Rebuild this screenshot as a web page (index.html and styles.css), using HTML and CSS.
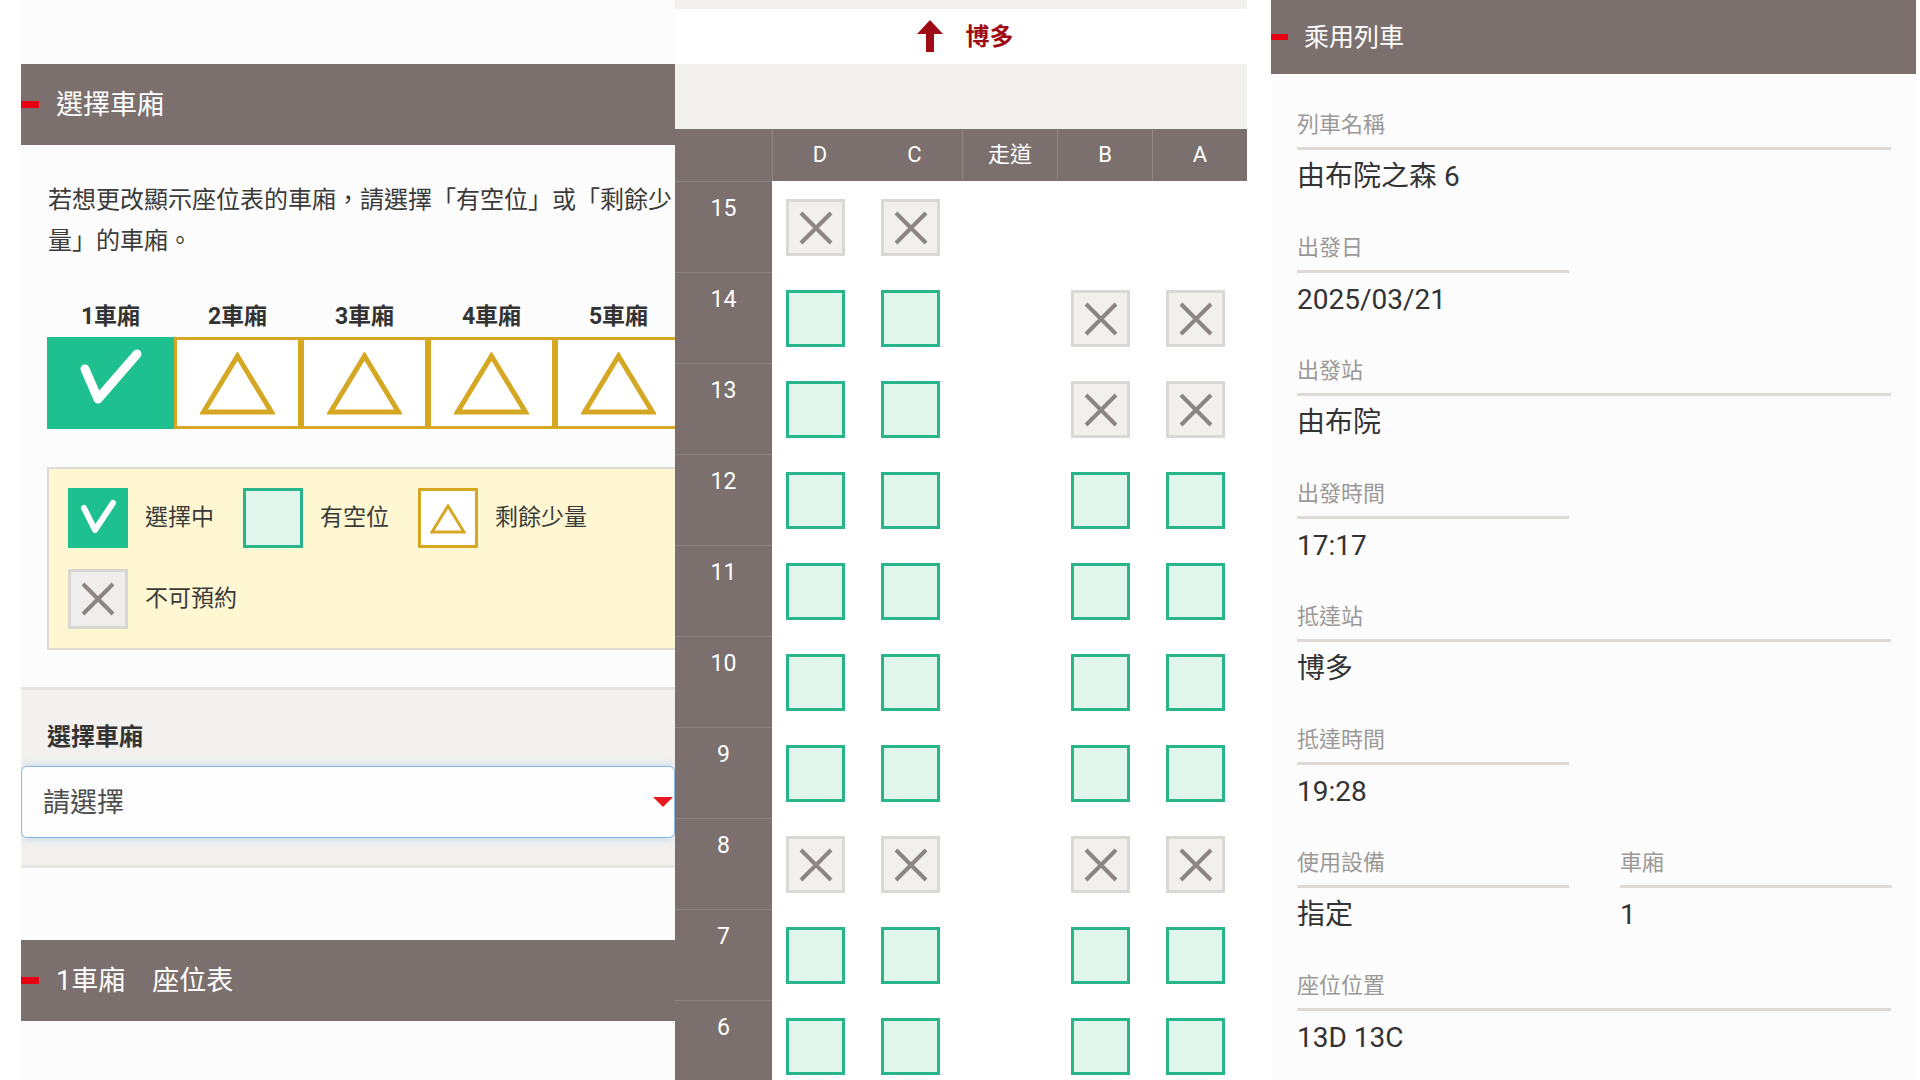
FILE: index.html
```html
<!DOCTYPE html>
<html lang="zh-Hant">
<head>
  <meta charset="UTF-8">
  <meta name="viewport" content="width=device-width, initial-scale=1">
  <title>座位表</title>
  <link rel="stylesheet" href="styles.css">
</head>
<body>
<div class="screen">

  <!-- 選擇車廂 -->
  <section class="panel pick">
    <h2 class="bar">選擇車廂</h2>
    <p class="note">若想更改顯示座位表的車廂，請選擇「有空位」或「剩餘少量」的車廂。</p>

    <div class="cars car-names">
      <div class="car-name">1車廂</div>
      <div class="car-name">2車廂</div>
      <div class="car-name">3車廂</div>
      <div class="car-name">4車廂</div>
      <div class="car-name">5車廂</div>
    </div>
    <div class="cars car-boxes">
      <div class="car on">
        <svg class="check" width="126" height="92" viewBox="0 0 126 92"><polyline points="37,32 50,62 89,17"/></svg>
      </div>
      <div class="car few">
        <svg class="tri" width="75" height="63" viewBox="0 0 75 63"><polygon points="37.5,4 71.5,60 3.5,60"/></svg>
      </div>
      <div class="car few">
        <svg class="tri" width="75" height="63" viewBox="0 0 75 63"><polygon points="37.5,4 71.5,60 3.5,60"/></svg>
      </div>
      <div class="car few">
        <svg class="tri" width="75" height="63" viewBox="0 0 75 63"><polygon points="37.5,4 71.5,60 3.5,60"/></svg>
      </div>
      <div class="car few">
        <svg class="tri" width="75" height="63" viewBox="0 0 75 63"><polygon points="37.5,4 71.5,60 3.5,60"/></svg>
      </div>
    </div>

    <div class="legend">
      <div class="legend-row">
        <div class="key">
          <span class="mark on"><svg class="check small" width="60" height="60" viewBox="0 0 60 60"><polyline points="16,20 27,42 45,15"/></svg></span>選擇中
        </div>
        <div class="key"><span class="mark free"></span>有空位</div>
        <div class="key">
          <span class="mark few"><svg class="tri small" width="36" height="31" viewBox="0 0 36 31"><polygon points="18,3 34,29 2,29"/></svg></span>剩餘少量
        </div>
      </div>
      <div class="legend-row">
        <div class="key">
          <span class="mark taken"><svg class="x" width="34" height="34" viewBox="0 0 34 34"><path d="M2 2L32 32M32 2L2 32"/></svg></span>不可預約
        </div>
      </div>
    </div>

    <div class="picker">
      <label class="picker-label">選擇車廂</label>
      <div class="select"><span>請選擇</span><i class="caret"></i></div>
    </div>

    <h2 class="bar bar-seat">1車廂　座位表</h2>
  </section>

  <!-- 座位表 -->
  <section class="panel seats">
    <div class="seats-top"></div>
    <div class="dest">
      <svg class="arrow" width="26" height="32" viewBox="0 0 26 32"><polygon points="13,0 26,14 17,14 17,32 9,32 9,14 0,14"/></svg>
      <span>博多</span>
    </div>
    <div class="spacer"></div>

    <div class="grid">
      <div class="th"></div>
      <div class="th sep">D</div>
      <div class="th">C</div>
      <div class="th sep">走道</div>
      <div class="th sep">B</div>
      <div class="th sep">A</div>

      <div class="rn">15</div>
      <div class="cell"><div class="seat taken"><svg class="x" width="34" height="34" viewBox="0 0 34 34"><path d="M2 2L32 32M32 2L2 32"/></svg></div></div>
      <div class="cell"><div class="seat taken"><svg class="x" width="34" height="34" viewBox="0 0 34 34"><path d="M2 2L32 32M32 2L2 32"/></svg></div></div>
      <div class="cell"></div>
      <div class="cell"></div>
      <div class="cell"></div>

      <div class="rn">14</div>
      <div class="cell"><div class="seat"></div></div>
      <div class="cell"><div class="seat"></div></div>
      <div class="cell"></div>
      <div class="cell"><div class="seat taken"><svg class="x" width="34" height="34" viewBox="0 0 34 34"><path d="M2 2L32 32M32 2L2 32"/></svg></div></div>
      <div class="cell"><div class="seat taken"><svg class="x" width="34" height="34" viewBox="0 0 34 34"><path d="M2 2L32 32M32 2L2 32"/></svg></div></div>

      <div class="rn">13</div>
      <div class="cell"><div class="seat"></div></div>
      <div class="cell"><div class="seat"></div></div>
      <div class="cell"></div>
      <div class="cell"><div class="seat taken"><svg class="x" width="34" height="34" viewBox="0 0 34 34"><path d="M2 2L32 32M32 2L2 32"/></svg></div></div>
      <div class="cell"><div class="seat taken"><svg class="x" width="34" height="34" viewBox="0 0 34 34"><path d="M2 2L32 32M32 2L2 32"/></svg></div></div>

      <div class="rn">12</div>
      <div class="cell"><div class="seat"></div></div>
      <div class="cell"><div class="seat"></div></div>
      <div class="cell"></div>
      <div class="cell"><div class="seat"></div></div>
      <div class="cell"><div class="seat"></div></div>

      <div class="rn">11</div>
      <div class="cell"><div class="seat"></div></div>
      <div class="cell"><div class="seat"></div></div>
      <div class="cell"></div>
      <div class="cell"><div class="seat"></div></div>
      <div class="cell"><div class="seat"></div></div>

      <div class="rn">10</div>
      <div class="cell"><div class="seat"></div></div>
      <div class="cell"><div class="seat"></div></div>
      <div class="cell"></div>
      <div class="cell"><div class="seat"></div></div>
      <div class="cell"><div class="seat"></div></div>

      <div class="rn">9</div>
      <div class="cell"><div class="seat"></div></div>
      <div class="cell"><div class="seat"></div></div>
      <div class="cell"></div>
      <div class="cell"><div class="seat"></div></div>
      <div class="cell"><div class="seat"></div></div>

      <div class="rn">8</div>
      <div class="cell"><div class="seat taken"><svg class="x" width="34" height="34" viewBox="0 0 34 34"><path d="M2 2L32 32M32 2L2 32"/></svg></div></div>
      <div class="cell"><div class="seat taken"><svg class="x" width="34" height="34" viewBox="0 0 34 34"><path d="M2 2L32 32M32 2L2 32"/></svg></div></div>
      <div class="cell"></div>
      <div class="cell"><div class="seat taken"><svg class="x" width="34" height="34" viewBox="0 0 34 34"><path d="M2 2L32 32M32 2L2 32"/></svg></div></div>
      <div class="cell"><div class="seat taken"><svg class="x" width="34" height="34" viewBox="0 0 34 34"><path d="M2 2L32 32M32 2L2 32"/></svg></div></div>

      <div class="rn">7</div>
      <div class="cell"><div class="seat"></div></div>
      <div class="cell"><div class="seat"></div></div>
      <div class="cell"></div>
      <div class="cell"><div class="seat"></div></div>
      <div class="cell"><div class="seat"></div></div>

      <div class="rn">6</div>
      <div class="cell"><div class="seat"></div></div>
      <div class="cell"><div class="seat"></div></div>
      <div class="cell"></div>
      <div class="cell"><div class="seat"></div></div>
      <div class="cell"><div class="seat"></div></div>
    </div>
  </section>

  <!-- 乘用列車 -->
  <section class="panel info">
    <h2 class="bar">乘用列車</h2>
    <div class="info-body">
      <div class="info-row">
        <div class="field wide"><div class="field-label">列車名稱</div><div class="field-value">由布院之森 6</div></div>
      </div>
      <div class="info-row">
        <div class="field"><div class="field-label">出發日</div><div class="field-value">2025/03/21</div></div>
      </div>
      <div class="info-row">
        <div class="field wide"><div class="field-label">出發站</div><div class="field-value">由布院</div></div>
      </div>
      <div class="info-row">
        <div class="field"><div class="field-label">出發時間</div><div class="field-value">17:17</div></div>
      </div>
      <div class="info-row">
        <div class="field wide"><div class="field-label">抵達站</div><div class="field-value">博多</div></div>
      </div>
      <div class="info-row">
        <div class="field"><div class="field-label">抵達時間</div><div class="field-value">19:28</div></div>
      </div>
      <div class="info-row">
        <div class="field"><div class="field-label">使用設備</div><div class="field-value">指定</div></div>
        <div class="field"><div class="field-label">車廂</div><div class="field-value">1</div></div>
      </div>
      <div class="info-row">
        <div class="field wide"><div class="field-label">座位位置</div><div class="field-value">13D 13C</div></div>
      </div>
    </div>
  </section>

</div>
</body>
</html>
```

FILE: styles.css
```css
body { margin: 0; background: #fff; font-family: Roboto, "Noto Sans CJK TC", sans-serif; color: #3a3a3a; }
.screen { display: flex; width: 1920px; height: 1080px; overflow: hidden; }
.panel { flex: none; height: 1080px; overflow: hidden; box-sizing: border-box; }

/* section bars */
.bar { margin: 0; height: 81px; box-sizing: border-box; padding-bottom: 4px; background: #7b706d; color: #fff; font-weight: normal; font-size: 27px; display: flex; align-items: center; }
.bar::before { content: ""; width: 18px; height: 7px; background: #e60012; margin: 4px 17px 0 0; }

/* left panel */
.pick { margin-left: 21px; width: 654px; background: #fcfcfc; padding-top: 64px; }
.note { margin: 35px 0 0 27px; width: 630px; font-size: 24px; line-height: 41px; }
.cars { display: flex; margin-left: 26px; }
.car-names { margin-top: 38px; }
.car-name { flex: none; width: 127px; text-align: center; font-weight: bold; font-size: 23px; line-height: 34px; color: #333; }
.car-boxes { margin-top: 3px; }
.car { flex: none; width: 127px; height: 92px; box-sizing: border-box; display: flex; align-items: center; justify-content: center; }
.car.on { background: #1ec08f; }
.car.few { border: 3px solid #d5a722; background: #fff; }

.check polyline { fill: none; stroke: #fff; stroke-width: 9; stroke-linecap: round; stroke-linejoin: round; }
.check.small polyline { stroke-width: 6; }
.tri polygon { fill: none; stroke: #d5a722; stroke-width: 5; }
.tri.small polygon { stroke-width: 3; }
.x path { fill: none; stroke: #8d8582; stroke-width: 4; }

.legend { margin: 38px 0 0 26px; width: 660px; box-sizing: border-box; border: 2px solid #dfdbd4; background: #fff7d2; padding: 19px; display: flex; flex-direction: column; gap: 21px; }
.legend-row { display: flex; gap: 29px; }
.key { display: flex; align-items: center; gap: 17px; font-size: 23px; line-height: 34px; }
.mark { flex: none; width: 60px; height: 60px; box-sizing: border-box; display: flex; align-items: center; justify-content: center; }
.mark.on { background: #1ec08f; }
.mark.free { border: 3px solid #27b589; background: #e0f6ec; }
.mark.few { border: 3px solid #d5a722; background: #fff; }
.mark.taken { border: 3px solid #d9d7d4; background: #efeeec; }

.picker { margin-top: 37px; border-top: 3px solid #e7e5e2; border-bottom: 3px solid #e7e5e2; background: #f2f1ef; padding: 30px 0 27px; }
.picker-label { display: block; margin-left: 26px; font-weight: bold; font-size: 24px; line-height: 34px; color: #333; }
.select { margin-top: 12px; height: 72px; box-sizing: border-box; border: 1.5px solid #88b8e3; border-radius: 6px; background: #fdfdfd; box-shadow: 0 0 10px rgba(120,170,225,.45); display: flex; align-items: center; padding: 0 0 3px 21px; font-size: 27px; color: #4d4d4d; }
.caret { margin: 3px 1px 0 auto; width: 0; height: 0; border-left: 10px solid transparent; border-right: 10px solid transparent; border-top: 10px solid #e8171f; }
.bar-seat { margin-top: 72px; }

/* seat map */
.seats { width: 572px; background: #fff; }
.seats-top { height: 9px; background: #f2f1ef; }
.dest { height: 55px; box-sizing: border-box; padding: 0 0 4px 8px; display: flex; align-items: center; justify-content: center; gap: 23px; color: #9e0b14; font-weight: bold; font-size: 24px; }
.arrow { margin-top: 2px; }
.arrow polygon { fill: #9e0b14; }
.spacer { height: 65px; background: #f2f1ef; }
.grid { display: grid; grid-template-columns: 97px repeat(5, 95px); }
.th { height: 52px; box-sizing: border-box; background: #7b706d; color: #fff; font-size: 22px; line-height: 52px; text-align: center; }
.th.sep { border-left: 1px solid #918884; }
.rn { height: 91px; box-sizing: border-box; background: #7b706d; color: #fff; font-size: 23px; line-height: 30px; padding-top: 12px; text-align: center; border-top: 1px solid #8c8380; }
.cell { height: 91px; box-sizing: border-box; padding: 18px 0 0 14px; }
.seat { width: 59px; height: 57px; box-sizing: border-box; border: 3px solid #27b589; background: #e0f6ec; display: flex; align-items: center; justify-content: center; }
.seat.taken { border-color: #dad8d5; background: #f1f0ed; }

/* train info */
.info { margin-left: 24px; width: 645px; background: #fcfcfc; }
.info .bar { height: 74px; padding-bottom: 5px; font-size: 25px; }
.info .bar::before { width: 17px; height: 6px; margin: 5px 16px 0 0; }
.info-body { padding: 0 25px 0 26px; }
.info-row { display: flex; gap: 51px; }
.field { flex: none; width: 272px; padding-top: 36px; }
.field.wide { width: 594px; }
.field-label { font-size: 22px; line-height: 30px; color: #9b9997; padding-bottom: 7px; border-bottom: 3px solid #dcd9d6; }
.field-value { margin-top: 7px; font-size: 28px; line-height: 40px; color: #333; }
```
